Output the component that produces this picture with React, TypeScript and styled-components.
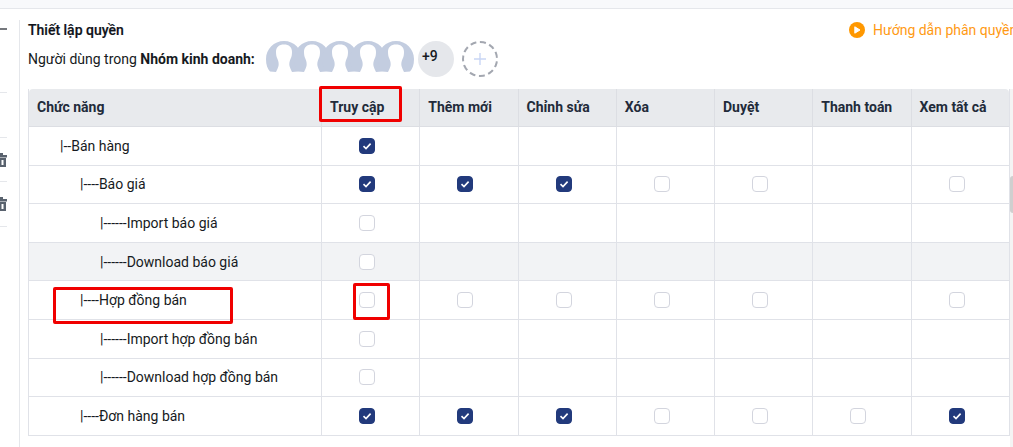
import React from "react";
import styled, { createGlobalStyle } from "styled-components";

const GlobalStyle = createGlobalStyle`
  html, body {
    margin: 0;
    padding: 0;
    height: 100%;
    overflow: hidden;
    background: #fff;
    font-family: Roboto, "Noto Sans", sans-serif;
    font-size: 14px;
    color: #161a22;
  }
`;

const Page = styled.div`
  position: relative;
  width: 1013px;
  height: 447px;
  overflow: hidden;
`;

const TopStrip = styled.div`
  height: 8px;
  background: #f8f9fb;
  border-bottom: 1px solid #e5e7eb;
`;

const Body = styled.div`
  display: flex;
  padding-top: 11px;
`;

const Sidebar = styled.div`
  width: 19px;
  height: 427px;
  flex: none;
  border-right: 1px solid #e5e7eb;
  overflow: hidden;
`;

const SideItem = styled.div<{ $h: number }>`
  width: 7px;
  height: ${(p) => p.$h}px;
  display: flex;
  align-items: center;
  justify-content: flex-end;
  overflow: hidden;
  box-sizing: border-box;
  border-bottom: 1px solid #e5e7eb;
`;

const SideDash = styled.div`
  align-self: flex-start;
  width: 7px;
  height: 2px;
  margin-top: 8px;
  flex: none;
  background: #75787d;
`;

const TrashIcon = styled.svg`
  width: 14px;
  height: 14px;
  flex: none;
  fill: #59626e;
`;

const Main = styled.div`
  flex: 1;
  min-width: 0;
  padding-left: 8px;
`;

const TitleRow = styled.div`
  display: flex;
  justify-content: space-between;
  align-items: center;
  height: 20px;
`;

const Title = styled.div`
  font-weight: 500;
  font-size: 14px;
  color: #10131a;
  -webkit-text-stroke: 0.2px #10131a;
`;

const GuideLink = styled.a`
  display: flex;
  align-items: center;
  gap: 8px;
  width: 164px;
  flex: none;
  white-space: nowrap;
  color: #ff9a14;
  font-size: 14px;
`;

const GuideIcon = styled.svg`
  width: 16px;
  height: 16px;
  flex: none;
`;

const UsersRow = styled.div`
  display: flex;
  align-items: center;
  height: 36px;
  margin-top: 1px;
`;

const UsersLabel = styled.div`
  width: 238px;
  flex: none;
  white-space: nowrap;
  strong {
    font-weight: 700;
  }
`;

const Avatar = styled.svg`
  width: 36px;
  height: 32px;
  flex: none;
  margin-right: -8px;
  margin-bottom: 4px;
  fill: #c3cde0;
`;

const MoreBadge = styled.div`
  width: 36px;
  height: 36px;
  box-sizing: border-box;
  flex: none;
  margin-left: 12px;
  padding: 7px 0 0 4px;
  border-radius: 50%;
  background: #e5e7eb;
  font-weight: 500;
  font-size: 14px;
`;

const AddButton = styled.div`
  width: 36px;
  height: 36px;
  box-sizing: border-box;
  flex: none;
  margin-left: 8px;
  border-radius: 50%;
  border: 2px dashed #a3a7b0;
  display: flex;
  align-items: center;
  justify-content: center;
  color: #c9d6f5;
`;

const Table = styled.div`
  margin-top: 12px;
  width: 982px;
  border-right: 1px solid #e0e2e8;
  border-left: 1px solid #e0e2e8;
  box-sizing: border-box;
`;

const HeadRow = styled.div`
  display: grid;
  grid-template-columns: 292px repeat(7, 98.25px);
  height: 38px;
  box-sizing: border-box;
  background: #e8eaed;
  border-radius: 4px 4px 0 0;
  border-bottom: 1px solid #dcdee3;
`;

const HeadCell = styled.div<{ $first?: boolean }>`
  display: flex;
  align-items: center;
  padding: 0 0 2px 8px;
  font-weight: 700;
  font-size: 14px;
  color: #222b3a;
  border-left: ${(p) => (p.$first ? "none" : "1px solid #dcdee3")};
`;

const Row = styled.div<{ $hover?: boolean }>`
  display: grid;
  grid-template-columns: 292px repeat(7, 98.25px);
  height: 38.6px;
  box-sizing: border-box;
  background: ${(p) => (p.$hover ? "#f2f3f5" : "#fff")};
  border-bottom: 1px solid #e0e2e8;
`;

const NameCell = styled.div<{ $level: number }>`
  display: flex;
  align-items: center;
  padding-left: ${(p) => 31 + (p.$level - 1) * 20}px;
  white-space: nowrap;
  font-size: 14px;
`;

const Cell = styled.div`
  display: flex;
  align-items: center;
  justify-content: center;
  padding-right: 7px;
  border-left: 1px solid #e0e2e8;
`;

const Check = styled.span<{ $on: boolean }>`
  width: 16px;
  height: 16px;
  box-sizing: border-box;
  border-radius: 4px;
  display: flex;
  align-items: center;
  justify-content: center;
  background: ${(p) => (p.$on ? "#223a7c" : "#fff")};
  border: 1px solid ${(p) => (p.$on ? "#223a7c" : "#d3d5de")};
`;

const Marker = styled.div<{ $x: number; $y: number; $w: number; $h: number }>`
  position: absolute;
  left: ${(p) => p.$x}px;
  top: ${(p) => p.$y}px;
  width: ${(p) => p.$w}px;
  height: ${(p) => p.$h}px;
  box-sizing: border-box;
  border: 3px solid #f00000;
  border-radius: 2px;
  pointer-events: none;
`;

const ScrollThumb = styled.div`
  position: absolute;
  right: 0;
  top: 176px;
  width: 3px;
  height: 37px;
  background: #cfcfcf;
  border-radius: 3px 0 0 3px;
`;

const ScrollTrack = styled.div`
  position: absolute;
  right: 0;
  top: 89px;
  bottom: 0;
  width: 3px;
  background: #f4f4f4;
`;

const columns = ["Truy cập", "Thêm mới", "Chỉnh sửa", "Xóa", "Duyệt", "Thanh toán", "Xem tất cả"];

type Perm = 0 | 1 | null;

const rows: { name: string; level: number; perms: Perm[]; hover?: boolean }[] = [
  { name: "|--Bán hàng", level: 1, perms: [1, null, null, null, null, null, null] },
  { name: "|----Báo giá", level: 2, perms: [1, 1, 1, 0, 0, null, 0] },
  { name: "|------Import báo giá", level: 3, perms: [0, null, null, null, null, null, null] },
  { name: "|------Download báo giá", level: 3, perms: [0, null, null, null, null, null, null], hover: true },
  { name: "|----Hợp đồng bán", level: 2, perms: [0, 0, 0, 0, 0, null, 0] },
  { name: "|------Import hợp đồng bán", level: 3, perms: [0, null, null, null, null, null, null] },
  { name: "|------Download hợp đồng bán", level: 3, perms: [0, null, null, null, null, null, null] },
  { name: "|----Đơn hàng bán", level: 2, perms: [1, 1, 1, 0, 0, 0, 1] },
];

const AvatarShape = () => (
  <Avatar viewBox="0 0 36 32">
    <path d="M18 0C8 0 0 8 0 18C0 24 1.5 28 4 30.5L10 31C11 29 12 27 12.5 25C13 23 12.5 20 11.5 18C10.5 16 10 14 10 11C10 6 13 3.5 18 3.5Z" />
    <path d="M18 0C28 0 36 8 36 18C36 24 34.5 28 32 30.5L26 31C25 29 24 27 23.5 25C23 23 23.5 20 24.5 18C25.5 16 26 14 26 11C26 6 23 3.5 18 3.5Z" />
  </Avatar>
);

const TrashPiece = () => (
  <TrashIcon viewBox="0 0 14 14">
    <path d="M4 0H10V2H14V4.5H0V2H4ZM1 5H13V14H1ZM8.5 7V12H10.5V7Z" fillRule="evenodd" />
  </TrashIcon>
);

const App: React.FC = () => {
  return (
    <Page>
      <GlobalStyle />
      <TopStrip />
      <Body>
        <Sidebar>
          <SideItem $h={73}>
            <SideDash />
          </SideItem>
          <SideItem $h={45} />
          <SideItem $h={44}>
            <TrashPiece />
          </SideItem>
          <SideItem $h={45}>
            <TrashPiece />
          </SideItem>
        </Sidebar>
        <Main>
          <TitleRow>
            <Title>Thiết lập quyền</Title>
            <GuideLink>
              <GuideIcon viewBox="0 0 16 16">
                <circle cx="8" cy="8" r="8" fill="#ff9800" />
                <path d="M5.8 4.8L11 8L5.8 11.2Z" fill="#fff" stroke="#fff" strokeLinejoin="round" />
              </GuideIcon>
              Hướng dẫn phân quyền
            </GuideLink>
          </TitleRow>
          <UsersRow>
            <UsersLabel>
              Người dùng trong <strong>Nhóm kinh doanh:</strong>
            </UsersLabel>
            {[0, 1, 2, 3, 4].map((i) => (
              <AvatarShape key={i} />
            ))}
            <MoreBadge>+9</MoreBadge>
            <AddButton>
              <svg width="14" height="14" viewBox="0 0 14 14" fill="none" stroke="currentColor" strokeWidth="1.4">
                <path d="M7 1V13M1 7H13" />
              </svg>
            </AddButton>
          </UsersRow>
          <Table>
            <HeadRow>
              <HeadCell $first>Chức năng</HeadCell>
              {columns.map((c) => (
                <HeadCell key={c}>{c}</HeadCell>
              ))}
            </HeadRow>
            {rows.map((r) => (
              <Row key={r.name} $hover={r.hover}>
                <NameCell $level={r.level}>{r.name}</NameCell>
                {r.perms.map((p, i) => (
                  <Cell key={i}>
                    {p !== null && (
                      <Check $on={p === 1}>
                        {p === 1 && (
                          <svg width="10" height="10" viewBox="0 0 10 10" fill="none" stroke="#fff" strokeWidth="1.6">
                            <path d="M1.5 5.2L4 7.6L8.6 2.6" />
                          </svg>
                        )}
                      </Check>
                    )}
                  </Cell>
                ))}
              </Row>
            ))}
          </Table>
        </Main>
      </Body>
      <ScrollTrack />
      <ScrollThumb />
      <Marker $x={319} $y={86} $w={83} $h={36} />
      <Marker $x={53} $y={287} $w={180} $h={37} />
      <Marker $x={353} $y={283} $w={37} $h={37} />
    </Page>
  );
};

export default App;
